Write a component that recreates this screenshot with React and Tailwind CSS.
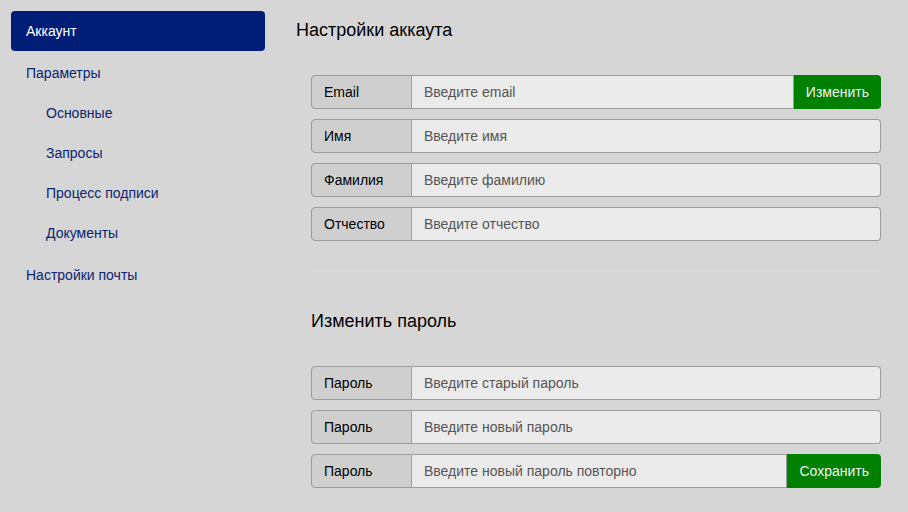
import { useState } from 'react'

const font = { fontFamily: '"Liberation Sans", Arial, sans-serif' }

function Field({ label, placeholder, button, type = 'text' }) {
  const [value, setValue] = useState('')
  return (
    <div className="flex h-[34px] w-full">
      <div className="flex w-[101px] shrink-0 items-center rounded-l-[4px] border border-[#9c9c9c] bg-[#cfcfcf] px-[12px] text-[14px] text-black">
        {label}
      </div>
      <input
        type={type}
        value={value}
        onChange={(e) => setValue(e.target.value)}
        placeholder={placeholder}
        className={`min-w-0 flex-1 border-y border-r border-[#9c9c9c] bg-[#ebebeb] px-[12px] text-[14px] text-[#333] placeholder-[#555] outline-none ${button ? '' : 'rounded-r-[4px]'}`}
      />
      {button && (
        <button className="shrink-0 rounded-r-[4px] bg-[#008000] px-[12px] text-[14px] text-[#f0f0f0]">
          {button}
        </button>
      )}
    </div>
  )
}

export default function App() {
  const subItems = ['Основные', 'Запросы', 'Процесс подписи', 'Документы']

  return (
    <div className="flex min-h-screen bg-[#d6d6d6]" style={font}>
      <aside className="w-[296px] shrink-0 px-[11px] pt-[11px]">
        <div className="flex h-[40px] w-[254px] items-center rounded-[4px] bg-[#001e78] px-[15px] text-[14px] text-white">
          Аккаунт
        </div>
        <div className="mt-[2px] flex h-[40px] items-center px-[15px] text-[14px] text-[#0b2470]">Параметры</div>
        {subItems.map((item) => (
          <div key={item} className="flex h-[40px] items-center pl-[35px] text-[14px] text-[#0b2470]">
            {item}
          </div>
        ))}
        <div className="mt-[2px] flex h-[40px] items-center px-[15px] text-[14px] text-[#0b2470]">Настройки почты</div>
      </aside>

      <main className="w-[585px] pt-[19px]">
        <h2 className="text-[18px] leading-[22px] text-black">Настройки аккаута</h2>
        <div className="ml-[15px] mt-[34px] flex flex-col gap-[10px]">
          <Field label="Email" placeholder="Введите email" button="Изменить" />
          <Field label="Имя" placeholder="Введите имя" />
          <Field label="Фамилия" placeholder="Введите фамилию" />
          <Field label="Отчество" placeholder="Введите отчество" />
        </div>

        <div className="ml-[15px] mt-[30px] h-px bg-[#dcdcdc]" />

        <div className="ml-[15px]">
          <h2 className="mt-[38px] text-[18px] leading-[22px] text-black">Изменить пароль</h2>
          <div className="mt-[34px] flex flex-col gap-[10px]">
            <Field label="Пароль" type="password" placeholder="Введите старый пароль" />
            <Field label="Пароль" type="password" placeholder="Введите новый пароль" />
            <Field label="Пароль" type="password" placeholder="Введите новый пароль повторно" button="Сохранить" />
          </div>
        </div>
      </main>
    </div>
  )
}
